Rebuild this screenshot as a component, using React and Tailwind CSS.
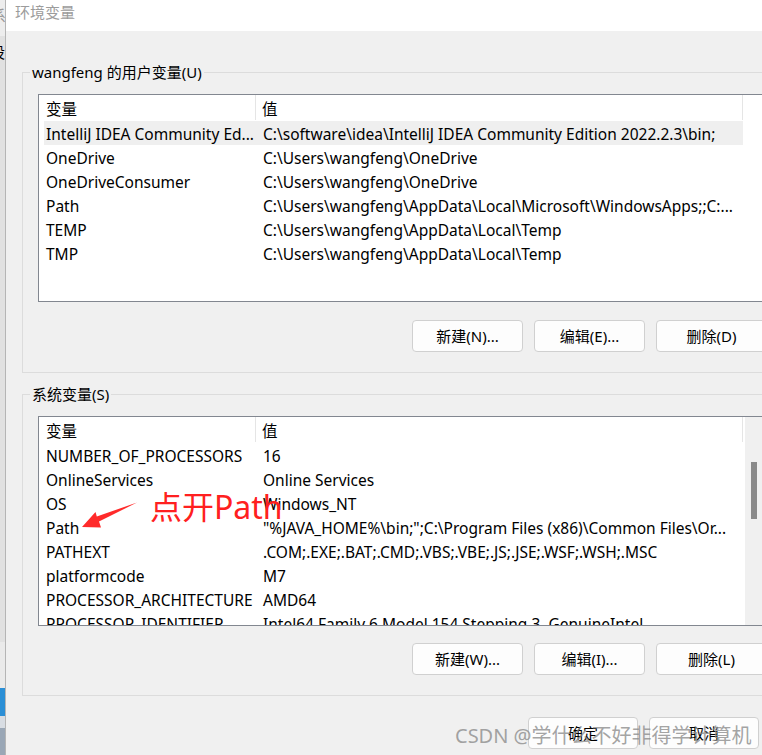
import React from "react";

const userRows = [
  ["IntelliJ IDEA Community Ed...", "C:\\software\\idea\\IntelliJ IDEA Community Edition 2022.2.3\\bin;", true],
  ["OneDrive", "C:\\Users\\wangfeng\\OneDrive"],
  ["OneDriveConsumer", "C:\\Users\\wangfeng\\OneDrive"],
  ["Path", "C:\\Users\\wangfeng\\AppData\\Local\\Microsoft\\WindowsApps;;C:..."],
  ["TEMP", "C:\\Users\\wangfeng\\AppData\\Local\\Temp"],
  ["TMP", "C:\\Users\\wangfeng\\AppData\\Local\\Temp"],
];

const sysRows = [
  ["NUMBER_OF_PROCESSORS", "16"],
  ["OnlineServices", "Online Services"],
  ["OS", "Windows_NT"],
  ["Path", "\"%JAVA_HOME%\\bin;\";C:\\Program Files (x86)\\Common Files\\Or..."],
  ["PATHEXT", ".COM;.EXE;.BAT;.CMD;.VBS;.VBE;.JS;.JSE;.WSF;.WSH;.MSC"],
  ["platformcode", "M7"],
  ["PROCESSOR_ARCHITECTURE", "AMD64"],
  ["PROCESSOR_IDENTIFIER", "Intel64 Family 6 Model 154 Stepping 3, GenuineIntel"],
];

function ListView({ rows, heightClass, scrollbar }) {
  return (
    <div className={`w-[726px] ${heightClass} border border-[#828790] bg-white flex overflow-hidden`}>
      <div className="flex-1 flex flex-col overflow-hidden">
        <div className="flex h-[26px] shrink-0 text-[15.5px] leading-[29px] text-black overflow-hidden">
          <div className="w-[217px] pl-[7px] border-r border-[#e5e5e5] h-[25px]">变量</div>
          <div className="w-[487px] pl-[6px] border-r border-[#e5e5e5] h-[25px]">值</div>
        </div>
        {rows.map(([k, v, sel], i) => (
          <div
            key={i}
            className={`ml-[5px] w-[699px] flex h-[24px] shrink-0 text-[15.5px] leading-[26px] text-black whitespace-nowrap overflow-hidden ${sel ? "bg-[#efefef]" : ""}`}
          >
            <div className="w-[212px] pl-[2px] overflow-hidden">{k}</div>
            <div className="w-[487px] pl-[7px] overflow-hidden">{v}</div>
          </div>
        ))}
      </div>
      {scrollbar && (
        <div className="w-[17px] shrink-0 bg-[#f0f0f0] flex justify-center pt-[45px] mr-[1px]">
          <div className="w-[6px] h-[57px] bg-[#8a8a8a]" />
        </div>
      )}
    </div>
  );
}

function Btn({ children, className = "" }) {
  return (
    <div
      className={`h-[32px] rounded-[4px] border border-[#d0d0d0] bg-[#fdfdfd] flex items-center justify-center text-[15px] text-black shrink-0 ${className}`}
    >
      {children}
    </div>
  );
}

export default function App() {
  return (
    <div className="w-[762px] h-[755px] overflow-hidden flex bg-[#f0f0f0] font-['Noto_Sans','Noto_Sans_CJK_SC',sans-serif] relative">
      {/* background window strip */}
      <div className="w-[5px] shrink-0 flex flex-col overflow-hidden">
        <div className="h-[36px] bg-[#ededed] text-[15px] text-[#999] leading-[30px] -ml-[9px]">系</div>
        <div className="h-[606px] bg-[#e1e1e1] text-[15px] leading-[32px] -ml-[10px] text-black">设</div>
        <div className="h-[46px] bg-[#eaeaea]" />
        <div className="h-[28px] bg-[#2b8fd6]" />
        <div className="h-[12px] bg-[#d8dde3]" />
        <div className="flex-1 bg-[#9aa7b6]" />
      </div>

      {/* dialog */}
      <div className="flex-1 flex flex-col border-l border-[#b5b5b5] overflow-hidden">
        <div className="h-[31px] shrink-0 bg-white pl-[9px] pt-[2px] text-[15px] leading-[20px] text-[#9c9c9c]">
          环境变量
        </div>

        <div className="flex-1 bg-[#f0f0f0] pl-[16px] pt-[32px] flex flex-col overflow-hidden">
          <fieldset className="w-[780px] shrink-0 border border-[#dcdcdc] p-0 m-0">
            <legend className="ml-[7px] px-[2px] text-[15px] leading-[18px] text-black">
              wangfeng 的用户变量(U)
            </legend>
            <div className="pl-[15px] pt-[13px] pb-[20px] flex flex-col">
              <ListView rows={userRows} heightClass="h-[208px]" />
              <div className="flex gap-[11px] ml-[374px] mt-[18px]">
                <Btn className="w-[111px]">新建(N)...</Btn>
                <Btn className="w-[111px]">编辑(E)...</Btn>
                <Btn className="w-[111px]">删除(D)</Btn>
              </div>
            </div>
          </fieldset>

          <fieldset className="w-[780px] shrink-0 border border-[#dcdcdc] p-0 m-0 mt-[12px]">
            <legend className="ml-[7px] px-[2px] text-[15px] leading-[18px] text-black">
              系统变量(S)
            </legend>
            <div className="pl-[15px] pt-[13px] pb-[20px] flex flex-col">
              <ListView rows={sysRows} heightClass="h-[210px]" scrollbar />
              <div className="flex gap-[11px] ml-[374px] mt-[17px]">
                <Btn className="w-[111px]">新建(W)...</Btn>
                <Btn className="w-[111px]">编辑(I)...</Btn>
                <Btn className="w-[111px]">删除(L)</Btn>
              </div>
            </div>
          </fieldset>

          <div className="flex gap-[11px] ml-[506px] mt-[21px]">
            <Btn className="w-[110px]">确定</Btn>
            <Btn className="w-[110px]">取消</Btn>
          </div>
        </div>
      </div>

      {/* red annotation */}
      <div className="absolute left-[150px] top-[485px] text-[32px] leading-[44px] text-[#ff2020] whitespace-nowrap">
        点开Path
      </div>
      <svg className="absolute left-0 top-0" width="762" height="755" viewBox="0 0 762 755">
        <polygon
          points="82,527 95.5,512 96.8,516.5 137,502.5 99,521.6 101,527.5"
          fill="#ff2a2a"
        />
      </svg>

      {/* watermark */}
      <div className="absolute left-[455px] top-[722px] text-[20px] leading-[28px] text-[#8c8c8c]/80 whitespace-nowrap">
        CSDN @学什么不好非得学计算机
      </div>
    </div>
  );
}
